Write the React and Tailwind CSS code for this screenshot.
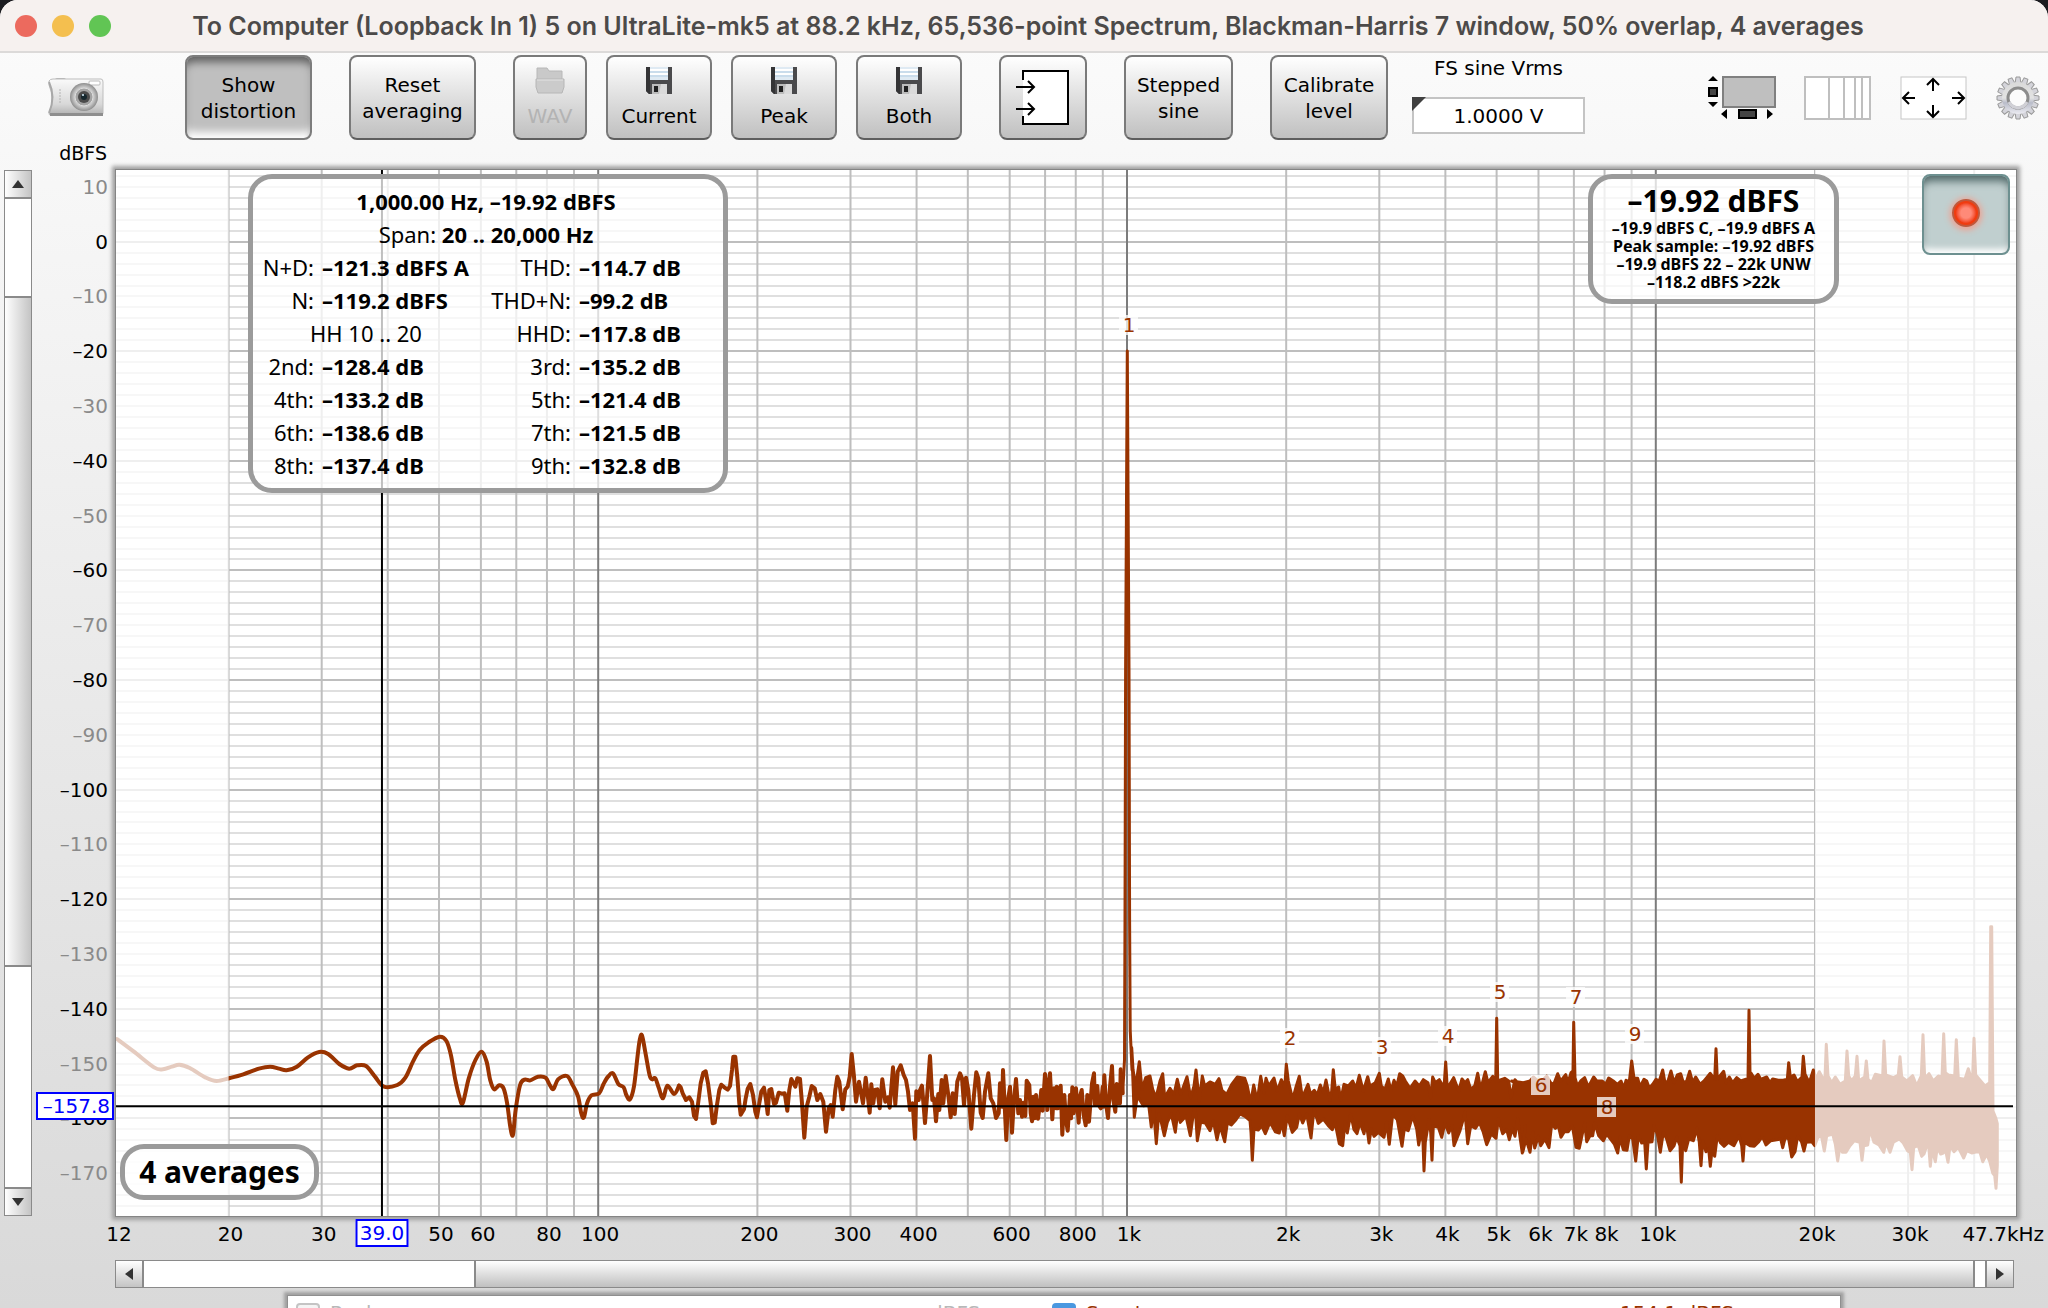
import { useState } from "react";

const W = 1900;
const H = 1046;

const xOf = (hz) => 1011 + 528.8 * Math.log10(hz / 1000);
const yOf = (db) => 71.7 - 5.479 * db;

const pct = (value, total) => `${(value / total) * 100}%`;

const V_LINES = [
  20, 30, 40, 50, 60, 70, 80, 90, 200, 300, 400, 500, 600, 700, 800, 900, 2000, 3000, 4000, 5000,
  6000, 7000, 8000, 9000, 20000, 30000, 40000,
];
const DECADES = [100, 1000, 10000];

const H_LINES = [];
for (let db = 12; db >= -176; db -= 2) H_LINES.push(db);

const Y_LABELS = [];
for (let db = 10; db >= -170; db -= 10) Y_LABELS.push(db);

const X_LABELS = [
  [12.3, "12"], [20, "20"], [30, "30"], [50, "50"], [60, "60"], [80, "80"], [100, "100"],
  [200, "200"], [300, "300"], [400, "400"], [600, "600"], [800, "800"], [1000, "1k"],
  [2000, "2k"], [3000, "3k"], [4000, "4k"], [5000, "5k"], [6000, "6k"], [7000, "7k"],
  [8000, "8k"], [10000, "10k"], [20000, "20k"], [30000, "30k"], [45000, "47.7kHz"],
];

const HARMONICS = [
  ["1", 1013, 155], ["2", 1174, 868], ["3", 1266, 877], ["4", 1332, 866], ["5", 1384, 822],
  ["6", 1425, 915], ["7", 1460, 827], ["8", 1491, 937], ["9", 1519, 864],
];

// Trace segments as "x,y" pairs, each with its own origin and scale
const LOW = `262,177 300,215 345,262 365,268 385,260 402,254 425,264 460,292 485,303 515,294 545,283 580,266
605,260 625,266 642,271 665,260 690,232 715,216 735,222 760,252 782,266 800,256 820,258 840,290 860,320 890,315
908,293 925,245 940,210 960,187 985,170 1000,183 1010,225 1020,300 1030,355 1037,368 1050,295 1065,240 1079,215
1090,245 1098,300 1107,328 1118,316 1128,325 1136,370 1143,440 1149,465 1155,390 1165,315 1175,299 1188,301
1205,290 1222,293 1232,316 1240,327 1250,298 1270,288 1283,316 1295,350 1302,400 1308,412 1315,370 1325,346
1342,340 1352,312 1362,290 1373,280 1385,312 1397,322 1403,345 1411,358 1420,320 1428,230 1433,180 1438,166
1446,220 1455,285 1461,298 1468,295 1476,325 1485,355 1495,317 1510,342 1521,317`;

const MID = `2,142 8,160 18,180 28,172 36,185 42,228 48,237 55,185 62,130 70,98 77,94 84,130 92,190 98,250 104,248
110,200 118,150 124,134 133,142 143,149 150,138 156,90 160,50 166,50 172,110 178,190 182,224 192,208 197,175
203,146 211,132 219,165 226,215 231,232 238,190 244,155 252,143 258,180 263,222 268,150 274,147 282,192 288,188
296,158 305,161 314,160 322,212 328,150 334,117 346,140 352,115 360,117 366,190 373,293 380,200 388,170 395,138
404,145 412,180 421,162 430,185 438,275 446,205 452,195 458,230 466,150 472,110 478,125 488,208 496,148 503,140
509,110 515,42 522,110 528,185 537,125 549,190 557,113 569,218 574,133 580,190 585,150 592,148 599,205 607,118
616,185 624,172 629,203 639,82 646,193 653,95 662,76 671,105 678,120 684,155 690,210 698,190 705,296 709,154
716,180 720,150 726,137 735,249 742,160 750,48 757,180 762,175 768,244 775,162 778,210 785,120 790,190 797,108
805,165 812,232 818,160 824,222 832,125 840,100 846,115 852,195 858,113 865,150 874,266 882,165 889,97 895,115
902,218 908,234 915,155 925,100 932,175 940,190 948,234 956,220 960,130 966,200 969,90 979,300 984,180 990,140
996,278 1001,190 1008,117 1015,220 1020,180 1026,230 1030,188 1036,228 1040,122 1048,135 1052,220 1056,244
1060,170 1064,235 1068,165 1074,236 1080,190 1084,150 1088,212 1095,102 1102,210 1106,130 1110,100 1117,238
1122,145 1128,205 1130,140 1134,205 1142,137 1147,284 1153,165 1158,240 1163,272 1170,165 1173,235 1177,142
1181,220 1188,145 1196,248 1200,170 1205,150 1211,225 1217,256 1222,165 1227,245 1232,180 1236,130 1242,100
1245,195 1252,138 1256,195 1262,205 1268,140 1270,200 1273,106 1278,190 1284,234 1290,140 1296,78 1300,180
1306,215 1310,132 1316,190 1320,190 1322,88 1328,160`;

const TOP_1 = `5,140 9,205 15,245 20,235 28,182 36,265 47,230 60,225 68,265 78,290 90,240 98,218 104,290 120,262
132,280 142,235 152,280 171,227 182,290 192,255 198,207 208,300 217,225 224,255 240,243 256,250 267,233 276,268
290,280 305,250 322,228 344,232 352,255 362,305 371,252 382,300 392,226 402,275 408,232 416,255 432,231 442,270
454,236 464,260 469,190 475,240 488,295 498,258 508,226 517,290 534,250 542,280 553,268 562,282 571,252 580,275
588,237 600,298 605,270 610,206 616,265 626,258 632,298 642,250 655,255 668,240 678,262 688,223 700,270 713,227
720,255 736,245 748,217 754,255 765,265 775,234 783,270 792,238 800,255 809,218 818,225 826,240 840,262 855,240
868,255 880,236 894,245 902,290 908,228 916,245 928,236 942,260 947,183 952,262 971,230 986,270 996,234 1005,245
1013,236 1022,265 1034,255 1043,217 1052,265 1066,212 1074,245 1088,226 1097,240 1100,52 1103,240 1124,232
1136,240 1143,290 1155,236 1168,250 1180,245`;

const TOP_2 = `-25,240 -10,250 10,245 30,240 40,228 60,245 80,225 92,245 101,250 113,218 122,240 137,221 144,245
153,215 159,210 161,64 165,230 172,255 182,240 194,230 205,258 221,228 230,240 247,240 257,250 266,231 280,240
292,250 303,240 312,262 318,238 328,242 335,180 342,232 353,232 360,258 372,235 380,240 388,262 398,250 408,235
418,240 428,207 435,245 444,240 453,210 462,245 472,222 482,218 490,245 500,240 509,211 518,245 527,228 540,250
552,240 562,228 571,217 584,235 588,143 592,235 611,211 618,245 628,228 638,245 650,230 662,240 678,235 684,235
687,28 690,216 693,216 703,232 714,220 722,235 740,228 750,245 758,234 775,238 790,238 802,235 806,185 811,228
822,222 832,242 846,228 850,166 855,220 868,245 880,207 888,235 898,212 910,235 915,230 919,130 924,225 935,245
946,228 960,250 976,240 981,150 986,225 995,240 1006,225 1011,166 1016,240 1034,228 1039,180 1044,235 1055,245
1066,220 1088,225 1092,120 1097,222 1120,230 1135,222 1140,167 1145,228 1160,240 1178,224 1190,255 1204,225
1209,101 1214,232 1227,218 1240,240 1255,225 1266,228 1271,98 1276,215 1285,222 1304,225 1309,116 1315,232
1335,235 1345,203 1352,228 1358,222 1362,112 1367,222 1382,240 1395,255 1409,245 1412,-223 1415,-223 1419,330
1427,350 1432,368`;

const BOTTOM_1 = `13,355 22,290 40,320 56,318 64,384 70,320 79,434 86,345 94,370 103,410 112,370 124,345 136,400
143,340 151,370 168,352 181,410 192,330 196,330 202,425 212,370 226,372 240,395 250,365 261,422 270,380 284,428
292,372 304,378 318,362 330,345 345,352 360,365 363,400 367,484 372,390 385,393 395,380 406,404 420,370 436,398
448,402 455,370 463,410 472,350 487,400 500,385 508,345 518,372 530,345 543,417 552,330 565,373 580,360 595,380
607,392 615,370 628,434 638,440 645,370 652,402 662,345 672,392 681,404 690,370 702,404 709,370 717,432 724,390
732,412 745,400 762,415 770,370 778,436 788,345 802,362 816,442 823,390 835,395 848,350 860,390 866,438 873,400
879,430 882,516 886,430 897,362 902,400 906,484 910,380 925,385 935,415 945,372 956,402 966,380 972,440 980,420
990,395 1000,360 1005,340 1013,434 1022,380 1036,388 1048,370 1060,400 1070,437 1084,405 1098,418 1105,360
1118,404 1130,392 1138,422 1147,388 1155,412 1163,360 1170,415 1177,462 1186,380`;

const BOTTOM_2 = `8,460 18,420 30,460 38,400 44,447 55,412 62,440 75,420 87,446 95,375 106,388 115,380 123,415
133,398 145,398 157,380 168,445 178,448 188,400 194,372 200,428 210,410 218,410 224,372 236,410 250,425 260,405
270,418 283,435 293,462 300,415 310,452 321,454 328,410 338,420 347,486 355,410 365,432 374,430 379,510 384,430
396,428 402,380 412,405 421,460 430,400 440,420 450,455 462,440 470,415 480,440 484,550 488,430 497,455 506,420
520,425 531,388 538,430 543,500 548,425 558,458 566,450 571,502 576,455 584,472 592,410 602,432 612,442 625,430
642,440 657,410 665,440 669,486 673,430 690,440 703,442 715,430 727,412 738,438 752,425 770,422 782,420 788,446
796,415 806,420 815,474 825,458 833,410 845,430 852,456 858,430 875,428 884,440 895,412 905,415 913,456 920,410
938,405 946,435 953,486 960,440 967,460 978,460 990,440 1003,425 1020,430 1026,484 1031,440 1043,438 1050,390
1062,430 1077,438 1091,460 1098,430 1110,460 1120,430 1138,420 1150,432 1163,456 1171,460 1176,512 1181,445
1195,440 1205,472 1212,465 1220,440 1226,440 1231,502 1236,450 1246,488 1252,445 1262,465 1270,462 1277,455
1284,490 1290,440 1302,458 1315,445 1331,477 1340,455 1355,462 1370,458 1380,460 1388,488 1400,465 1410,490
1418,522 1424,530 1428,568 1432,500`;

const place = (text, ox, oy, sx, sy = 3) =>
  text.trim().split(/\s+/).map((pair) => {
    const [x, y] = pair.split(",").map(Number);
    return [ox + x / sx, oy + y / sy];
  });

const join = (points) => points.map(([x, y]) => `${x.toFixed(1)},${y.toFixed(1)}`).join(" L");

// Catmull-Rom spline through the points
const smooth = (points) => {
  let d = `M${points[0].join(",")}`;
  for (let i = 0; i < points.length - 1; i++) {
    const a = points[i - 1] || points[i];
    const b = points[i];
    const c = points[i + 1];
    const e = points[i + 2] || c;
    d += ` C${b[0] + (c[0] - a[0]) / 6},${b[1] + (c[1] - a[1]) / 6} ${c[0] - (e[0] - b[0]) / 6},${c[1] - (e[1] - b[1]) / 6} ${c[0]},${c[1]}`;
  }
  return d;
};

const lowPath = smooth(place(LOW, -116, 810, 2.24));
const midPath = `M${join([...place(LOW, -116, 810, 2.24).slice(-1), ...place(MID, 564, 870, 3)])}`;
const peakPath = "M1006.7,923 L1008.5,890 L1009,750 L1009.6,500 L1011.3,181 L1013,500 L1013.6,750 L1014.2,860 L1016,900";
const noisePath = `M${join([
  ...place(TOP_1, 1014, 831, 3),
  ...place(TOP_2, 1404, 831, 3),
  ...place(BOTTOM_2, 1404, 829, 3).reverse(),
  ...place(BOTTOM_1, 1014, 829, 3).reverse(),
])} Z`;

const TraceChart = () => {
  const left = xOf(20);
  const right = xOf(20000);
  return (
    <svg viewBox={`0 0 ${W} ${H}`} preserveAspectRatio="none" className="block w-full h-full">
      <rect width={W} height={H} fill="#fff" />
      {H_LINES.map((db) => (
        <line
          key={db}
          x1="0"
          x2={W}
          y1={Math.round(yOf(db))}
          y2={Math.round(yOf(db))}
          stroke={db % 20 === 0 ? "#bebebe" : "#dfdfdf"}
          strokeWidth="2"
        />
      ))}
      {V_LINES.map((hz) => (
        <line key={hz} x1={xOf(hz)} x2={xOf(hz)} y1="0" y2={H} stroke="#bebebe" strokeWidth="2" />
      ))}
      {DECADES.map((hz) => (
        <line key={hz} x1={xOf(hz)} x2={xOf(hz)} y1="0" y2={H} stroke="#7c7c7c" strokeWidth="2" />
      ))}
      <g stroke="#993300" strokeWidth="3" strokeLinejoin="round" strokeLinecap="round">
        <path d={lowPath} fill="none" strokeWidth="4" />
        <path d={midPath} fill="none" strokeWidth="4" />
        <path d={noisePath} fill="#993300" />
        <path d={peakPath} fill="none" />
      </g>
      <rect x="0" y="0" width={left} height={H} fill="#fff" opacity="0.75" />
      <rect x={right} y="0" width={W - right} height={H} fill="#fff" opacity="0.75" />
      {HARMONICS.map(([n, x, y]) => (
        <g key={n}>
          <rect x={x - 10} y={y - 10} width="19" height="20" fill="#fff" opacity="0.75" />
          <text x={x} y={y + 7} textAnchor="middle" fontSize="20" fill="#993300">
            {n}
          </text>
        </g>
      ))}
      <line x1="0" x2={W - 3} y1={yOf(-157.8)} y2={yOf(-157.8)} stroke="#000" strokeWidth="2" />
      <line x1={xOf(39)} x2={xOf(39)} y1="0" y2={H} stroke="#000" strokeWidth="2" />
    </svg>
  );
};

const CameraIcon = () => (
  <svg width="56" height="40" viewBox="0 0 56 40">
    <defs>
      <linearGradient id="camBody" x1="0" y1="0" x2="0" y2="1">
        <stop offset="0" stopColor="#fafafa" />
        <stop offset="0.7" stopColor="#d8d8d8" />
        <stop offset="1" stopColor="#b0b0b0" />
      </linearGradient>
      <radialGradient id="camLens">
        <stop offset="0.3" stopColor="#8b8b8b" />
        <stop offset="0.7" stopColor="#c9c9c9" />
        <stop offset="1" stopColor="#8d8d8d" />
      </radialGradient>
    </defs>
    <rect x="7" y="1" width="11" height="4" rx="2" fill="#b5b5b5" />
    <path d="M1 4 Q2 2 5 2 H53 Q55 2 55 5 V36 Q55 38 53 38 H2 Q1 38 1 36 Q7 22 1 8 Z" fill="url(#camBody)" stroke="#bdbdbd" />
    <path d="M1 5 Q8 20 1 36" fill="none" stroke="#a8a8a8" strokeWidth="2" />
    <rect x="2" y="36" width="53" height="3" fill="#8e8e8e" />
    <rect x="41" y="4" width="11" height="4" rx="1" fill="#fff" stroke="#bbb" />
    <path d="M12 12 V26" stroke="#b4b4b4" strokeDasharray="2 1" />
    <circle cx="36" cy="20" r="14" fill="url(#camLens)" />
    <circle cx="36" cy="20" r="9" fill="#a3a3a3" stroke="#dedede" />
    <circle cx="36" cy="20" r="6" fill="#4b4b4b" />
    <circle cx="36" cy="20" r="3" fill="#15272d" />
    <circle cx="35" cy="18" r="1" fill="#d8f2ff" />
  </svg>
);

const FloppyIcon = () => (
  <svg width="26" height="28" viewBox="0 0 26 28">
    <path d="M0 0 H26 V27 H3 L0 24 Z" fill="#4a4a4c" />
    <path d="M0 0 H4 V27 H3 L0 24 Z" fill="#343436" />
    <rect x="4" y="0" width="18" height="13" fill="#dfeaf3" />
    <path d="M4 3 H22 M4 7 H22" stroke="#fff" strokeWidth="2" />
    <path d="M4 5 H22 M4 9 H22" stroke="#b5cfe4" />
    <rect x="6" y="17" width="15" height="10" fill="#bcbcbc" />
    <rect x="8" y="19" width="4" height="6" fill="#202020" />
    <path d="M15 17 H21 V27 H13 Z" fill="#dadada" />
  </svg>
);

const FolderIcon = () => (
  <svg width="30" height="28" viewBox="0 0 30 28">
    <path d="M2 1 H12 L14 4 H27 V14 H2 Z" fill="#c9c9c9" stroke="#b8b8b8" />
    <path d="M1 12 H29 V20 L27 26 H3 L1 20 Z" fill="#cbcbcb" stroke="#b6b6b6" />
    <path d="M2 13 H28" stroke="#e3e3e3" />
  </svg>
);

const LoopbackIcon = () => (
  <svg width="54" height="56" viewBox="0 0 54 56">
    <rect x="7" y="1" width="45" height="53" fill="#fff" />
    <path d="M7 10 V1 H52 V54 H7 V46" fill="none" stroke="#000" strokeWidth="2" />
    <path d="M0 17 H17 M12 11 L18 17 L12 23 M0 39 H17 M12 33 L18 39 L12 45" fill="none" stroke="#000" strokeWidth="2" />
  </svg>
);

const ScrollbarsIcon = () => (
  <svg width="68" height="44" viewBox="0 0 68 44">
    <path d="M5 0 L10 5 H0 Z M5 31 L0 26 H10 Z M13 38 L19 33 V43 Z M65 38 L59 33 V43 Z" fill="#000" />
    <rect x="1" y="12" width="8" height="8" fill="#444" stroke="#000" strokeWidth="2" />
    <rect x="31" y="34" width="17" height="8" fill="#444" stroke="#000" strokeWidth="2" />
    <rect x="15" y="1" width="52" height="30" fill="#bfbfbf" stroke="#808080" strokeWidth="2" />
  </svg>
);

const LogAxisIcon = () => (
  <svg width="68" height="44" viewBox="0 0 68 44">
    <rect x="1" y="1" width="65" height="42" fill="#fff" stroke="#bfbfbf" strokeWidth="2" />
    <path d="M25 1 V43 M40 1 V43 M51 1 V43 M58 1 V43" stroke="#bfbfbf" strokeWidth="2" />
  </svg>
);

const FitIcon = () => (
  <svg width="68" height="44" viewBox="0 0 68 44">
    <rect x="1" y="1" width="65" height="42" fill="#fff" stroke="#c6c6c6" />
    <path
      d="M33 3 V15 M27 9 L33 3 L39 9 M33 29 V41 M27 35 L33 41 L39 35 M3 22 H15 M9 16 L3 22 L9 28 M52 22 H64 M58 16 L64 22 L58 28"
      fill="none"
      stroke="#000"
      strokeWidth="2"
    />
  </svg>
);

const TEETH = Array.from({ length: 16 }, (_, i) => (i * 360) / 16);

const GearIcon = () => (
  <svg width="44" height="44" viewBox="0 0 44 44">
    <defs>
      <linearGradient id="gear" x1="0" y1="0" x2="0" y2="1">
        <stop offset="0" stopColor="#d9d9d9" />
        <stop offset="0.5" stopColor="#e3e3e3" />
        <stop offset="0.65" stopColor="#b9bcc9" />
        <stop offset="1" stopColor="#ececf2" />
      </linearGradient>
    </defs>
    <g fill="#d4d4da" stroke="#9a9a9a">
      {TEETH.map((angle) => (
        <path key={angle} d="M19 8 L20 1 H24 L25 8" transform={`rotate(${angle} 22 22)`} />
      ))}
    </g>
    <circle cx="22" cy="22" r="16" fill="url(#gear)" />
    <circle cx="22" cy="22" r="10" fill="#fbfbfb" stroke="#8c8c8c" strokeWidth="3" />
    <path d="M13 26 A10 10 0 0 0 31 26" fill="none" stroke="#d0d0d6" strokeWidth="3" />
  </svg>
);

const ToolButton = ({ className = "", pressed, children, ...props }) => (
  <button
    className={`flex flex-col items-center justify-center h-[85px] shrink-0 rounded-lg border-2 leading-[26px] disabled:text-[#b3b3b3] ${
      pressed
        ? "border-[#7d7d7d] bg-[#bfbfbf] shadow-[inset_0_8px_8px_-3px_#606060,inset_0_-10px_8px_-4px_#ffffff]"
        : "border-[#7a7a7a] border-b-[#5e5e5e] bg-linear-to-b from-white to-[#c0c0c0]"
    } ${className}`}
    {...props}
  >
    {children}
  </button>
);

const Arrow = ({ d }) => (
  <svg width="12" height="12" viewBox="0 0 12 12">
    <path d={d} fill="#333" />
  </svg>
);

const distortionRows = [
  ["N+D:", "–121.3 dBFS A", "THD:", "–114.7 dB"],
  ["N:", "–119.2 dBFS", "THD+N:", "–99.2 dB"],
  ["HH 10 .. 20", null, "HHD:", "–117.8 dB"],
  ["2nd:", "–128.4 dB", "3rd:", "–135.2 dB"],
  ["4th:", "–133.2 dB", "5th:", "–121.4 dB"],
  ["6th:", "–138.6 dB", "7th:", "–121.5 dB"],
  ["8th:", "–137.4 dB", "9th:", "–132.8 dB"],
];

const DistortionPanel = () => (
  <div className="absolute left-[132px] top-1 w-[480px] rounded-[24px] border-[5px] border-[#9b9b9b] bg-white/75 py-1.5 font-['Noto_Sans',sans-serif] text-[22px] leading-[33px]">
    <div className="pr-1 text-center font-bold">1,000.00 Hz, –19.92 dBFS</div>
    <div className="pr-1 text-center">
      Span: <b>20 .. 20,000 Hz</b>
    </div>
    <table className="w-full table-fixed">
      <colgroup>
        <col className="w-[61px]" />
        <col className="w-[165px]" />
        <col className="w-[92px]" />
        <col />
      </colgroup>
      <tbody>
        {distortionRows.map(([a, b, c, d]) => (
          <tr key={a}>
            {b ? (
              <>
                <td className="text-right whitespace-nowrap">{a}</td>
                <td className="pl-2 font-bold whitespace-nowrap">{b}</td>
              </>
            ) : (
              <td colSpan={2} className="text-center">
                {a}
              </td>
            )}
            <td className="text-right whitespace-nowrap">{c}</td>
            <td className="pl-2 font-bold whitespace-nowrap">{d}</td>
          </tr>
        ))}
      </tbody>
    </table>
  </div>
);

const LevelPanel = () => (
  <div className="absolute right-[177px] top-1 w-[251px] rounded-[24px] border-[5px] border-[#9b9b9b] bg-white/75 pt-1 pb-2 text-center font-['Noto_Sans',sans-serif] font-bold text-[16px] leading-[18px]">
    <div className="text-[30px] leading-[36px]">–19.92 dBFS</div>
    <div>–19.9 dBFS C, –19.9 dBFS A</div>
    <div>Peak sample: –19.92 dBFS</div>
    <div>–19.9 dBFS 22 – 22k UNW</div>
    <div>–118.2 dBFS &gt;22k</div>
  </div>
);

const App = () => {
  const [showDistortion, setShowDistortion] = useState(true);
  const [vrms, setVrms] = useState("1.0000 V");

  return (
    <div className="h-screen bg-[#1c1c20] overflow-hidden font-['DejaVu_Sans',sans-serif] text-[20px] text-black">
      <div className="h-full flex flex-col overflow-hidden rounded-t-[18px] bg-linear-to-b from-[#fcfcfc] to-[#d9d9d9]">
        <header className="flex h-[53px] shrink-0 items-center border-b-2 border-[#dcdad9] bg-[#f6f1ef]">
          <div className="flex gap-[15px] pl-[15px]">
            <button aria-label="Close" className="size-[22px] rounded-full bg-[#ec6a5e]" />
            <button aria-label="Minimise" className="size-[22px] rounded-full bg-[#f4bf4f]" />
            <button aria-label="Zoom" className="size-[22px] rounded-full bg-[#61c554]" />
          </div>
          <h1 className="flex-1 pr-[103px] text-center whitespace-nowrap font-['Inter',sans-serif] text-[25px] leading-8 font-semibold text-[#4c4a49]">
            To Computer (Loopback In 1) 5 on UltraLite-mk5 at 88.2 kHz, 65,536-point Spectrum, Blackman-Harris 7 window, 50% overlap, 4 averages
          </h1>
        </header>

        <div className="flex shrink-0 items-start pt-0.5 pl-12 pr-2">
          <button aria-label="Capture" className="mt-[22px] mr-[81px]">
            <CameraIcon />
          </button>
          <div className="flex gap-[37px]">
            <ToolButton
              className="w-[127px]"
              pressed={showDistortion}
              aria-pressed={showDistortion}
              onClick={() => setShowDistortion(!showDistortion)}
            >
              <span>Show</span>
              <span>distortion</span>
            </ToolButton>
            <ToolButton className="w-[127px]">
              <span>Reset</span>
              <span>averaging</span>
            </ToolButton>
            <div className="flex gap-[19px]">
              <ToolButton className="w-[74px] gap-2" disabled>
                <FolderIcon />
                WAV
              </ToolButton>
              <ToolButton className="w-[106px] gap-2">
                <FloppyIcon />
                Current
              </ToolButton>
              <ToolButton className="w-[106px] gap-2">
                <FloppyIcon />
                Peak
              </ToolButton>
              <ToolButton className="w-[106px] gap-2">
                <FloppyIcon />
                Both
              </ToolButton>
            </div>
            <ToolButton className="w-[88px]">
              <LoopbackIcon />
            </ToolButton>
            <ToolButton className="w-[109px]">
              <span>Stepped</span>
              <span>sine</span>
            </ToolButton>
            <ToolButton className="w-[118px]">
              <span>Calibrate</span>
              <span>level</span>
            </ToolButton>
          </div>
          <div className="ml-6 flex w-[173px] flex-col items-center">
            <label htmlFor="vrms" className="leading-[26px]">
              FS sine Vrms
            </label>
            <div className="relative mt-4 w-full">
              <input
                id="vrms"
                value={vrms}
                onChange={(e) => setVrms(e.target.value)}
                className="block h-[37px] w-full border-2 border-[#c4c4c4] bg-white text-center"
              />
              <svg className="absolute top-0 left-0" width="14" height="14">
                <path d="M0 0 H14 L0 14 Z" fill="#404040" />
              </svg>
            </div>
          </div>
          <div className="mt-[21px] ml-auto flex gap-[28px]">
            <button aria-label="Scrollbars"><ScrollbarsIcon /></button>
            <button aria-label="Frequency axis"><LogAxisIcon /></button>
            <button aria-label="Fit to data"><FitIcon /></button>
            <button aria-label="Settings"><GearIcon /></button>
          </div>
        </div>

        <div className="h-[30px] w-[107px] shrink-0 text-right text-[19px] leading-[26px]">dBFS</div>

        <main className="flex min-h-0 flex-1 pl-1 pr-8">
          <div className="flex w-7 flex-col border border-[#8a8a8a] bg-white">
            <button aria-label="Scroll up" className="flex h-7 items-center justify-center border-b-2 border-[#8a8a8a] bg-linear-to-r from-white to-[#c4c4c4]">
              <Arrow d="M6 2 L12 10 H0 Z" />
            </button>
            <div className="grow-[97] basis-0" />
            <div className="grow-[671] basis-0 border-y-2 border-[#8a8a8a] bg-linear-to-r from-white to-[#c4c4c4]" />
            <div className="grow-[221] basis-0" />
            <button aria-label="Scroll down" className="flex h-7 items-center justify-center border-t-2 border-[#8a8a8a] bg-linear-to-r from-white to-[#c4c4c4]">
              <Arrow d="M0 2 H12 L6 10 Z" />
            </button>
          </div>

          <div className="relative w-[84px]">
            {Y_LABELS.map((db) => (
              <span
                key={db}
                className={`absolute right-2 -translate-y-1/2 leading-6 ${db % 20 === 0 ? "text-black" : "text-[#8a8a8a]"}`}
                style={{ top: pct(yOf(db), H) }}
              >
                {String(db).replace("-", "–")}
              </span>
            ))}
            <span
              className="absolute right-0.5 z-10 w-[78px] -translate-y-1/2 border-2 border-[#0000ff] bg-white pr-0.5 text-right leading-6 text-[#0000ff]"
              style={{ top: pct(yOf(-157.8), H) }}
            >
              –157.8
            </span>
          </div>

          <div className="relative min-w-0 flex-1 shadow-[0_0_0_1px_#858585,0_0_4px_4px_#a0a0a0]">
            <TraceChart />
            <DistortionPanel />
            <LevelPanel />
            <button
              aria-label="Record"
              className="absolute top-1 right-1.5 flex h-[81px] w-[88px] items-start justify-center rounded-lg border-2 border-[#6d9090] bg-[#c0cfcf] pt-[23px] shadow-[inset_0_8px_8px_-3px_#506868,inset_0_-8px_6px_-4px_#ffffff]"
            >
              <span className="size-7 rounded-full border-2 border-[#c0583c] bg-radial from-[#ff8a78] from-30% to-[#f03c10] to-60% shadow-[0_1px_6px_2px_#f0a090]" />
            </button>
            <div className="absolute bottom-4 left-1 w-[199px] rounded-[24px] border-[5px] border-[#9b9b9b] bg-white/75 text-center font-['Noto_Sans',sans-serif] text-[30px] leading-[46px] font-bold">
              4 averages
            </div>
          </div>
        </main>

        <div className="relative ml-[116px] mr-8 h-11 shrink-0">
          {X_LABELS.map(([hz, label]) => (
            <span
              key={label}
              className="absolute top-1.5 -translate-x-1/2 leading-6"
              style={{ left: pct(xOf(hz) + 2, W) }}
            >
              {label}
            </span>
          ))}
          <span
            className="absolute top-[3px] w-[53px] -translate-x-1/2 border-2 border-[#0000ff] bg-white text-center leading-6 text-[#0000ff]"
            style={{ left: pct(xOf(39), W) }}
          >
            39.0
          </span>
        </div>

        <div className="ml-[115px] mr-[34px] flex h-7 shrink-0 border border-[#8a8a8a] bg-white">
          <button aria-label="Scroll left" className="flex w-7 items-center justify-center border-r-2 border-[#8a8a8a] bg-linear-to-b from-white to-[#c4c4c4]">
            <Arrow d="M10 0 V12 L2 6 Z" />
          </button>
          <div className="grow-[331] basis-0" />
          <div className="grow-[1501] basis-0 border-x-2 border-[#8a8a8a] bg-linear-to-b from-white to-[#c0c0c0]" />
          <div className="grow-[10] basis-0" />
          <button aria-label="Scroll right" className="flex w-7 items-center justify-center border-l-2 border-[#8a8a8a] bg-linear-to-b from-white to-[#c4c4c4]">
            <Arrow d="M2 0 V12 L10 6 Z" />
          </button>
        </div>

        <div className="mt-2 ml-[288px] mr-[208px] h-3 shrink-0 bg-white shadow-[0_0_0_1px_#8f8f8f,0_0_3px_4px_#a0a0a0]">
          <div className="flex h-3 items-start overflow-hidden pt-[7px] pl-2 leading-5">
            <input type="checkbox" aria-label="Peak" className="size-6 shrink-0 appearance-none rounded border-2 border-[#c4c4c4] bg-[#f4f4f4]" />
            <span className="w-[610px] shrink-0 pl-2.5 text-[#b8b8b8]">Peak</span>
            <span className="w-[122px] shrink-0 text-[#b8b8b8]">dBFS</span>
            <input type="checkbox" defaultChecked aria-label="Spectrum" className="size-6 shrink-0 appearance-none rounded bg-[#4a98e0]" />
            <span className="w-[534px] shrink-0 pl-2.5 text-[#993300]">Spectrum</span>
            <span className="text-[#993300]">–154.1 dBFS</span>
          </div>
        </div>
      </div>
    </div>
  );
};

export default App;
